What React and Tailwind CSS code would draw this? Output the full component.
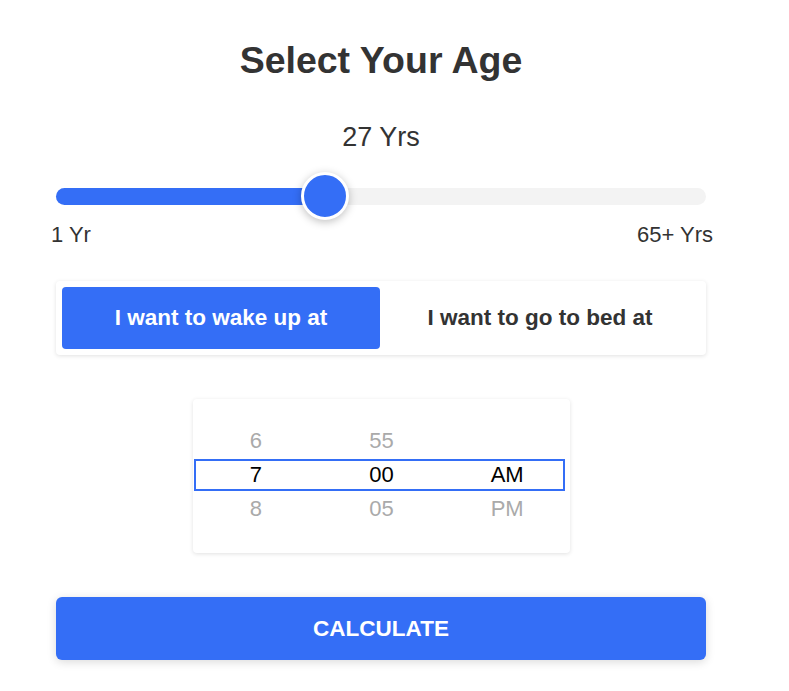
import { useState } from 'react';

const hours = ['6', '7', '8'];
const minutes = ['55', '00', '05'];
const periods = ['', 'AM', 'PM'];

const App = () => {
  const [age, setAge] = useState(27);
  const [mode, setMode] = useState('wake');
  const pct = ((age - 1) / 64) * 100;

  return (
    <div className="min-h-screen bg-white font-['Liberation_Sans',Arial,sans-serif] text-[#333]">
      <div className="w-[650px] ml-[56px] pt-[40px]">
        <h1 className="text-center text-[37.5px] font-bold leading-[40px]">Select Your Age</h1>

        <div className="mt-[42px] text-center text-[27px] leading-[30px]">{age} Yrs</div>

        {/* slider */}
        <div className="relative mt-[20px] h-[48px]">
          <div className="absolute left-0 right-0 top-[16px] h-[17px] rounded-full bg-[#f3f3f3]" />
          <div
            className="absolute left-0 top-[16px] h-[17px] rounded-full bg-[#346ef6]"
            style={{ width: `calc(${pct}% * 0.926 + 24px)` }}
          />
          <div
            className="absolute top-0 h-[48px] w-[48px] -translate-x-1/2 rounded-full border-[3px] border-white bg-[#346ef6] shadow-[0_2px_8px_rgba(0,0,0,0.25)]"
            style={{ left: `calc(${pct}% * 0.926 + 24px)` }}
          />
          <input
            type="range"
            min="1"
            max="65"
            value={age}
            onChange={(e) => setAge(Number(e.target.value))}
            className="absolute inset-0 h-full w-full cursor-pointer opacity-0"
          />
        </div>

        <div className="-ml-[5px] -mr-[7px] mt-[1px] flex justify-between text-[22px] leading-[28px]">
          <span>1 Yr</span>
          <span>65+ Yrs</span>
        </div>

        {/* mode toggle */}
        <div className="mt-[32px] flex rounded-[4px] bg-white p-[6px] shadow-[0_1px_4px_rgba(0,0,0,0.12)]">
          <button
            onClick={() => setMode('wake')}
            className={`h-[62px] w-[318px] rounded-[4px] text-[22.5px] font-bold ${mode === 'wake' ? 'bg-[#346ef6] text-white' : 'text-[#333]'}`}
          >
            I want to wake up at
          </button>
          <button
            onClick={() => setMode('bed')}
            className={`h-[62px] flex-1 rounded-[4px] text-[22.5px] font-bold ${mode === 'bed' ? 'bg-[#346ef6] text-white' : 'text-[#333]'}`}
          >
            I want to go to bed at
          </button>
        </div>

        {/* time picker */}
        <div className="mt-[44px] ml-[137px] w-[377px] rounded-[4px] bg-white pt-[25px] pb-[27px] shadow-[0_1px_4px_rgba(0,0,0,0.12)]">
          <div className="relative">
            <div className="absolute left-[1px] right-[5px] top-[35px] h-[32px] border-2 border-[#346ef6]" />
            {[0, 1, 2].map((i) => (
              <div key={i} className="grid h-[34px] grid-cols-3 text-[22px] leading-[34px]">
                {[hours[i], minutes[i], periods[i]].map((v, j) => (
                  <div key={j} className={`text-center ${i === 1 ? 'text-black' : 'text-[#aaa]'}`}>
                    {v}
                  </div>
                ))}
              </div>
            ))}
          </div>
        </div>

        <button className="mt-[44px] h-[63px] w-full rounded-[6px] bg-[#346ef6] text-[22.5px] font-bold text-white shadow-[0_2px_10px_rgba(0,0,0,0.15)]">
          CALCULATE
        </button>
      </div>
    </div>
  );
};

export default App;
